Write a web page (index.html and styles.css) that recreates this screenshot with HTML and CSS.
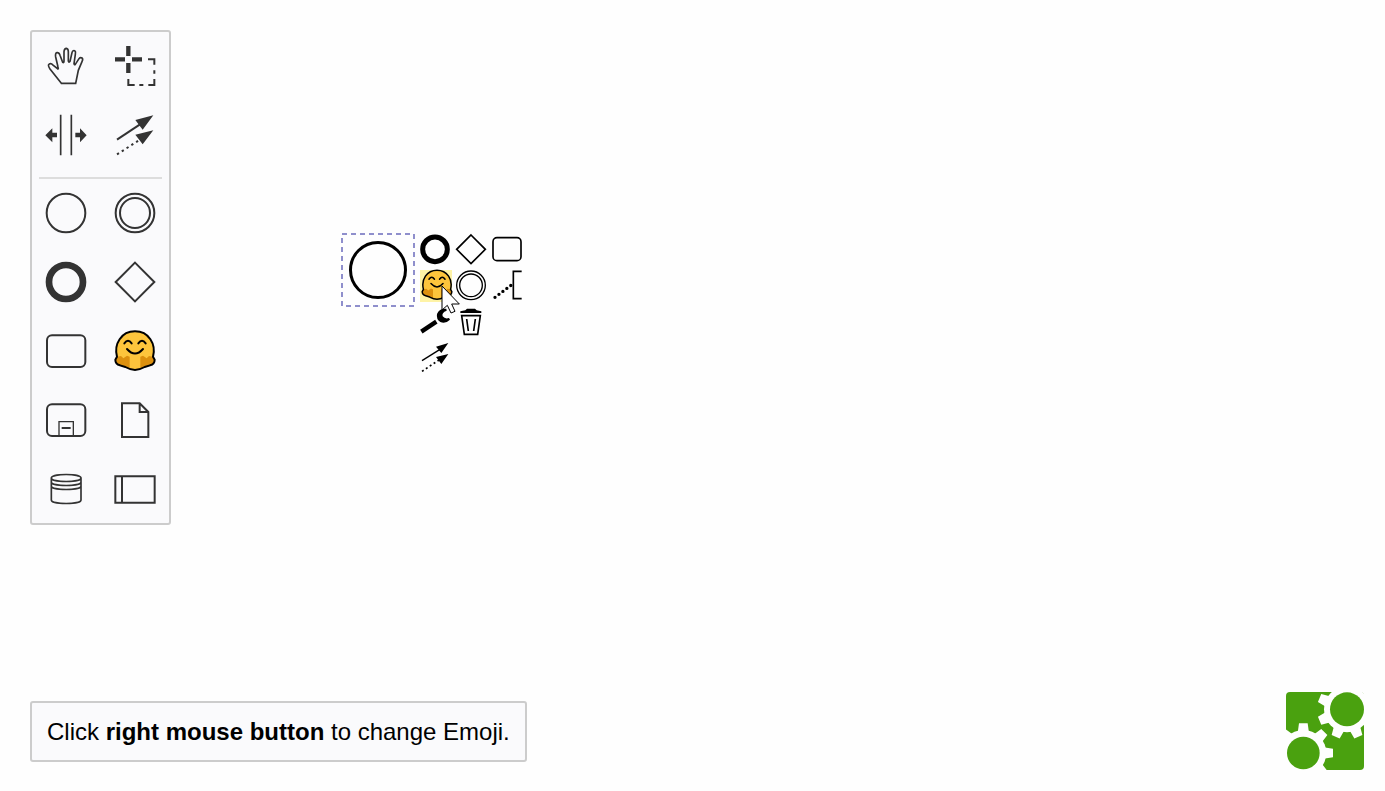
FILE: index.html
```html
<!DOCTYPE html>
<html lang="en">
<head>
<meta charset="utf-8">
<title>Emoji modeler</title>
<link rel="stylesheet" href="styles.css">
</head>
<body>
<svg class="defs" aria-hidden="true">
  <defs>
    <symbol id="emoji" viewBox="0 0 138 138">
      <path stroke="none" d="M15 86C5 48 28 10 69 10S133 48 123 86L128 95Q128 108 114 112L98 117Q82 126 69 126T40 117L24 112Q10 108 10 95Z" fill="#fdc53c"/>
      <path stroke="none" d="M16 86L27 84L34 91L45 83L53 86V121L24 112Q10 108 10 95ZM122 86L111 84L104 91L93 83L85 86V121L114 112Q128 108 128 95Z" fill="#dc900f"/>
      <path d="M15 86C5 48 28 10 69 10S133 48 123 86L128 95Q128 108 114 112L98 117Q82 126 69 126T40 117L24 112Q10 108 10 95Z" fill="none" stroke="#000" stroke-width="6" stroke-linejoin="round"/>
      <path d="M37 46Q48 31 59 46M79 46Q90 31 101 46M45 63Q69 90 93 63" fill="none" stroke="#000" stroke-width="6" stroke-linecap="round"/>
    </symbol>
  </defs>
</svg>
<main class="canvas">
  <svg class="shape" viewBox="0 0 76 76" role="img" aria-label="Start event">
    <rect class="selection" x="2" y="2" width="72" height="72"/>
    <circle class="event" cx="38" cy="38" r="27.5"/>
  </svg>

  <div class="context-pad">
    <button class="entry" aria-label="Append end event"><svg viewBox="246 18 108 108"><circle cx="300" cy="73" r="37" stroke-width="15"/></svg></button>
    <button class="entry" aria-label="Append gateway"><svg viewBox="354 18 108 108"><path d="M408 30L451 73L408 116L365 73Z"/></svg></button>
    <button class="entry" aria-label="Append task"><svg viewBox="462 18 108 108"><rect x="474" y="38" width="84" height="69" rx="12"/></svg></button>
    <button class="entry" aria-label="Append emoji task"><svg viewBox="246 126 108 108"><path class="hover" d="M255 135H351V231H255Z"/><use href="#emoji" x="254" y="128" width="104" height="104"/></svg></button>
    <button class="entry" aria-label="Append intermediate event"><svg viewBox="354 126 108 108"><circle cx="408" cy="181" r="43" stroke-width="4"/><circle cx="408" cy="181" r="34" stroke-width="4"/></svg></button>
    <button class="entry" aria-label="Append text annotation"><svg viewBox="462 126 108 108"><path d="M560 139H535V221H560"/><path d="M480 217L528 181" stroke-width="10" stroke-linecap="round" stroke-dasharray="0 14.8"/></svg></button>
    <button class="entry" aria-label="Change type"><svg viewBox="246 234 108 108"><path d="M259 320L304 290" stroke-width="13"/><path class="solid" d="M334 251Q312 250 306 267Q303 283 316 291Q332 297 345 284L342 279Q330 283 323 274Q319 263 335 257Z"/></svg></button>
    <button class="entry" aria-label="Remove"><svg viewBox="354 234 108 108"><path class="solid" d="M376 264V259L391 256L396 251H420L425 256L439 259V264Z"/><path d="M380 272H436L428 328H388ZM395 282L400 318M421 282L416 318"/></svg></button>
    <span></span>
    <button class="entry" aria-label="Connect"><svg viewBox="246 342 108 108"><path d="M261 407L315 373" stroke-width="4"/><path d="M261 439L312 405" stroke-dasharray="6 8"/><path class="solid" d="M340 354L303 365L319 384ZM340 387L303 396L319 417Z"/></svg></button>
  </div>

  <svg class="cursor" viewBox="319 176 60 93" aria-hidden="true"><path d="M322 182V254L338 240L349 263L361 258L351 236H374Z"/></svg>
</main>

<nav class="palette" aria-label="Tools">
  <button class="tool" aria-label="Hand tool"><svg viewBox="54 54 138 138"><path stroke-width="5" d="M109 175L75 132Q67 120 73 117Q78 114 85 121L99 132Q101 131 99 126L92 96Q90 84 96 83Q102 82 105 91L113 112Q117 115 117 108V80Q118 70 124 70Q130 71 130 80V108Q132 114 135 109L141 83Q143 75 149 77Q153 80 151 88L147 116Q148 121 151 118L162 101Q166 96 171 99Q175 102 171 110L160 136L152 175Z"/></svg></button>
  <button class="tool" aria-label="Lasso tool"><svg viewBox="261 54 138 138"><path d="M310 63V93M310 114V144M270 103H300M321 103H351" stroke-width="13"/><path d="M369 103H388V119M388 136V146M388 162V180H370M355 180H343M329 180H310V162"/></svg></button>
  <button class="tool" aria-label="Space tool"><svg viewBox="54 261 138 138"><path d="M107 269V391M139 269V391" stroke-width="5"/><path class="solid" d="M61 331L82 310V323H96V337H82V352ZM185 331L165 310V323H151V337H165V352Z"/></svg></button>
  <button class="tool" aria-label="Global connect tool"><svg viewBox="261 261 138 138"><path d="M276 344L345 298"/><path d="M276 388L345 344" stroke-dasharray="7 10"/><path class="solid" d="M385 271L331 285L353 314ZM385 316L331 329L353 358Z"/></svg></button>
  <hr class="separator">
  <button class="tool" aria-label="Start event"><svg viewBox="54 30 138 138"><circle cx="123" cy="99" r="58"/></svg></button>
  <button class="tool" aria-label="Intermediate event"><svg viewBox="261 30 138 138"><circle cx="330" cy="99" r="58"/><circle cx="330" cy="99" r="45"/></svg></button>
  <button class="tool" aria-label="End event"><svg viewBox="54 237 138 138"><circle cx="123" cy="306" r="51" stroke-width="20"/></svg></button>
  <button class="tool" aria-label="Gateway"><svg viewBox="261 237 138 138"><path d="M330 248L388 306L330 364L272 306Z"/></svg></button>
  <button class="tool" aria-label="Task"><svg viewBox="54 54 138 138"><rect x="66" y="76" width="115" height="95" rx="15"/></svg></button>
  <button class="tool" aria-label="Emoji task"><svg viewBox="0 0 138 138"><use href="#emoji" width="138" height="138"/></svg></button>
  <button class="tool" aria-label="Sub-process"><svg viewBox="54 261 138 138"><rect x="66" y="283" width="115" height="95" rx="15"/><path d="M102 378V335H145V378" stroke-width="4"/><path d="M110 354H137"/></svg></button>
  <button class="tool" aria-label="Data object"><svg viewBox="261 261 138 138"><path d="M291 280H344L370 306V381H291ZM344 280V306H370"/></svg></button>
  <button class="tool" aria-label="Data store"><svg viewBox="54 468 138 138"><path stroke-width="5" d="M79 504V570C79 584 168 584 168 570V504C168 490 79 490 79 504C79 518 168 518 168 504M79 516C79 530 168 530 168 516M79 528C79 542 168 542 168 528"/></svg></button>
  <button class="tool" aria-label="Pool"><svg viewBox="261 468 138 138"><path d="M271 499H389V578H271ZM291 499V578"/></svg></button>
</nav>

<p class="hint">Click <strong>right mouse button</strong> to change Emoji.</p>

<a class="logo" href="#" aria-label="bpmn.io">
  <svg viewBox="33 20 234 234">
    <rect class="green" x="33" y="20" width="234" height="234" rx="12"/>
    <g transform="translate(216 72)">
      <circle class="gap" r="69"/>
      <g id="teeth" transform="rotate(22.5)">
        <path id="bars" class="gap" d="M-17 -60L-13 -89H13L17 -60V60L13 89H-13L-17 60ZM-60 -17L-89 -13V13L-60 17H60L89 13V-13L60 -17Z"/>
        <use href="#bars" transform="rotate(45)"/>
      </g>
      <circle class="green" r="51"/>
    </g>
    <g transform="translate(85 203)">
      <circle class="gap" r="69"/>
      <use href="#teeth" transform="rotate(-22.5)"/>
      <circle class="green" r="49"/>
    </g>
  </svg>
</a>
</body>
</html>
```
FILE: styles.css
```css
* {
  box-sizing: border-box;
}

body {
  margin: 0;
  min-height: 100vh;
  position: relative;
  overflow: hidden;
  background: #fefefe;
  color: #000;
  font-family: "Liberation Sans", Arial, sans-serif;
}

button {
  padding: 0;
  border: 0;
  background: none;
  cursor: pointer;
}

svg {
  display: block;
  fill: none;
}

.defs {
  position: absolute;
  width: 0;
  height: 0;
}

.canvas {
  position: absolute;
  inset: 0;
}

.shape {
  position: absolute;
  left: 340px;
  top: 232px;
  width: 76px;
  height: 76px;
}

.selection {
  stroke: #8f8fcc;
  stroke-width: 2;
  stroke-dasharray: 5 4;
}

.event {
  stroke: #000;
  stroke-width: 3;
}

.context-pad {
  position: absolute;
  left: 417px;
  top: 231px;
  display: grid;
  grid-template-columns: repeat(3, 36px);
  grid-auto-rows: 36px;
}

.entry svg {
  width: 36px;
  height: 36px;
  stroke: #000;
  stroke-width: 5;
}

.entry .solid {
  fill: #000;
  stroke: none;
}

.entry .hover {
  fill: #fef3a6;
  stroke: none;
}

.cursor {
  position: absolute;
  left: 441px;
  top: 284px;
  width: 20px;
  height: 31px;
  fill: #fff;
  stroke: #000;
  stroke-width: 3;
}

.palette {
  position: absolute;
  left: 30px;
  top: 30px;
  display: grid;
  grid-template-columns: 68px 68px;
  gap: 1px;
  border: 2px solid #ccc;
  border-radius: 3px;
  background: #fafafc;
}

.tool {
  display: grid;
  place-items: center;
  height: 68px;
}

.tool svg {
  width: 46px;
  height: 46px;
  stroke: #333;
  stroke-width: 6;
}

.tool .solid {
  fill: #333;
  stroke: none;
}

.separator {
  grid-column: 1 / -1;
  height: 2px;
  margin: 7px 7px -1px;
  border: 0;
  background: #ddd;
}

.hint {
  position: absolute;
  left: 30px;
  bottom: 29px;
  margin: 0;
  padding: 14px 15px;
  border: 2px solid #ccc;
  border-radius: 3px;
  background: #fafafc;
  font-size: 24px;
  line-height: 29px;
}

.logo {
  position: absolute;
  right: 21px;
  bottom: 21px;
}

.logo svg {
  width: 78px;
  height: 78px;
}

.green {
  fill: #4aa10f;
}

.gap {
  fill: #fefefe;
}
```
